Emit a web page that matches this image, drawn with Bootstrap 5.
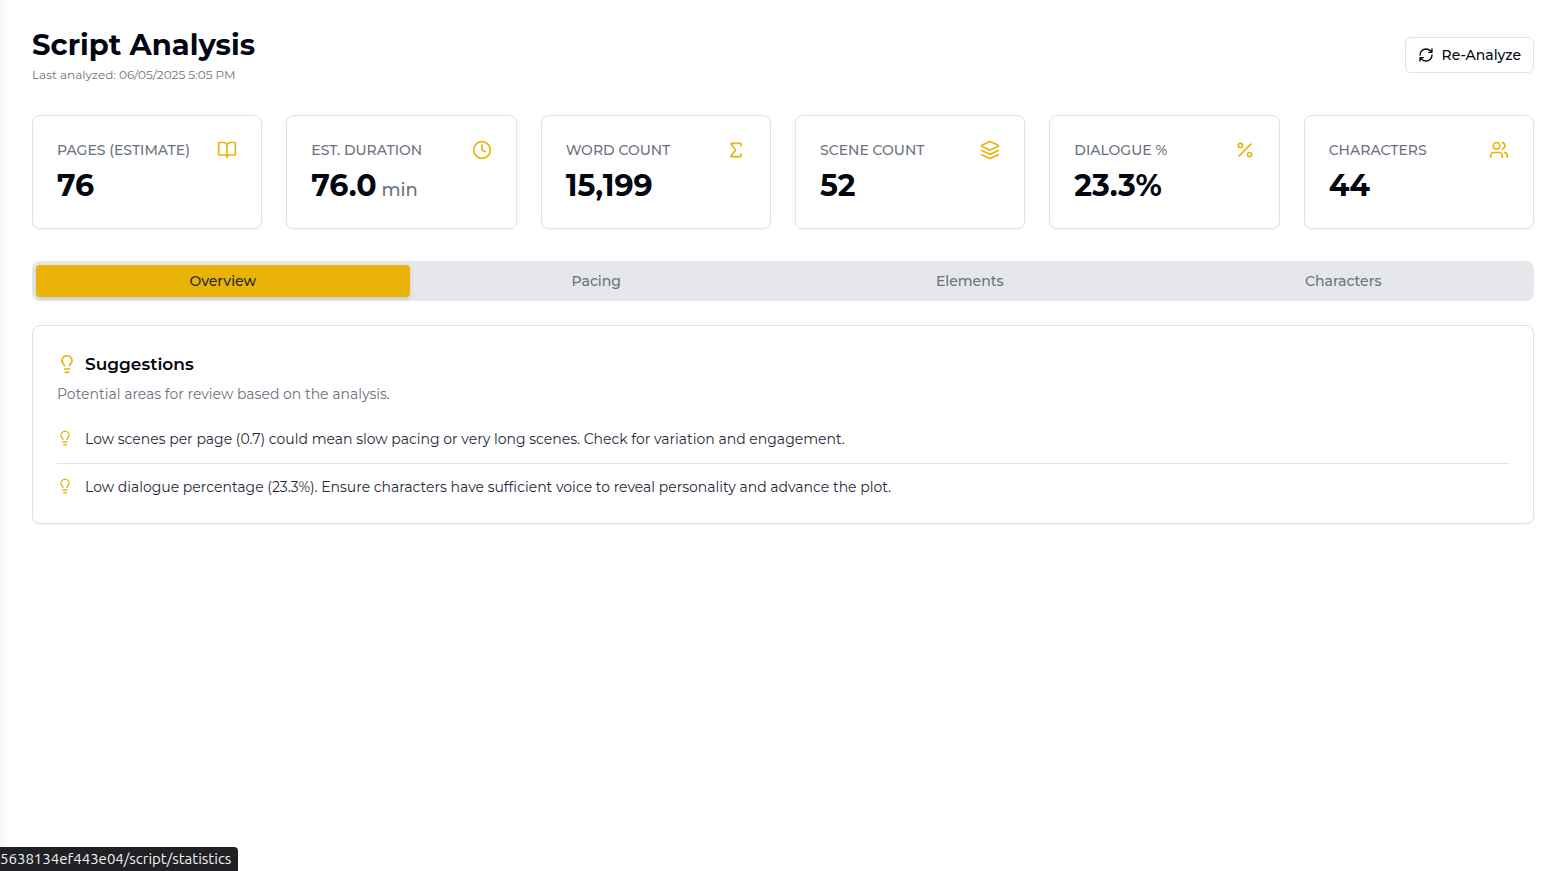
<!DOCTYPE html>
<html lang="en">
<head>
<meta charset="utf-8">
<meta name="viewport" content="width=device-width, initial-scale=1">
<title>Script Analysis</title>
<link href="https://cdn.jsdelivr.net/npm/bootstrap@5.3.0/dist/css/bootstrap.min.css" rel="stylesheet">
<style>
  :root { --ink: #030712; --muted: #6b7280; --line: #e1e3e8; --gold: #eab308; }
  body { font-family: Montserrat, Inter, "Open Sans", sans-serif; font-size: 14px; line-height: 20px; color: var(--ink); background: #fff; }
  svg { fill: none; stroke: currentColor; stroke-width: 2; stroke-linecap: round; stroke-linejoin: round; flex-shrink: 0; }
  .page { min-height: 100vh; padding: 24px 31px 24px 32px; background: linear-gradient(to right, #f7f7f7, #fff 12px); }
  .page-head { margin-bottom: 29px; }
  .page-title { font-size: 29px; line-height: 42px; font-weight: 700; }
  .stamp { padding-bottom: 2px; font-size: 12px; line-height: 18px; color: var(--muted); }
  .btn-outline { height: 36px; padding: 0 12px; border: 1px solid var(--line); border-radius: 6px; font-size: 14px; line-height: 20px; font-weight: 500; color: var(--ink); background: #fff; }
  .btn-outline:hover { background: #f3f4f6; }
  .panel { border: 1px solid var(--line); border-radius: 8px; box-shadow: 0 1px 2px rgba(0,0,0,.06); background: #fff; padding: 24px; height: 100%; }
  .gold { color: var(--gold); }
  .stat-label { font-size: 14px; line-height: 20px; font-weight: 500; color: var(--muted); white-space: nowrap; }
  .stat-value { font-size: 30px; line-height: 36px; font-weight: 700; }
  .stat-unit { font-size: 18px; line-height: 18px; font-weight: 500; color: var(--muted); }
  .tab-strip { margin: 32px 0 24px; padding: 4px; border-radius: 8px; background: #e5e7eb; }
  .tab-strip .nav-link { padding: 6px 12px; border: 0; border-radius: 4px; font-size: 14px; line-height: 20px; font-weight: 500; color: var(--muted); background: transparent; }
  .tab-strip .nav-link.active { color: #1f2937; background: var(--gold); box-shadow: 0 2px 4px rgba(0,0,0,.12); }
  .panel-title { font-size: 17px; line-height: 28px; font-weight: 600; }
  .panel-note { margin: 6px 0 23px; font-size: 14px; color: var(--muted); }
  .tips li { line-height: 24px; font-size: 14px; color: #1f2937; gap: 12px; }
  .tips li + li { margin-top: 12px; padding-top: 11px; border-top: 1px solid var(--line); }
  .tips svg { margin-top: 3px; }
  .link-status { height: 24px; padding: 0 7px 0 0; font: 15px/24px Ubuntu, "Noto Sans", sans-serif; color: #f1f1f1; background: #202124; border-top-right-radius: 4px; }
</style>
</head>
<body>
<svg class="d-none" aria-hidden="true">
  <symbol id="bulb" viewBox="0 0 24 24"><path d="M15 14c.2-1 .7-1.7 1.5-2.5 1-.9 1.5-2.2 1.5-3.5A6 6 0 0 0 6 8c0 1 .2 2.2 1.5 3.5.7.7 1.3 1.5 1.5 2.5M9 18h6M10 22h4"/></symbol>
</svg>
<main class="page">
  <header class="page-head d-flex justify-content-between align-items-center">
    <div>
      <h1 class="page-title mb-0">Script Analysis</h1>
      <p class="stamp mb-0">Last analyzed: 06/05/2025 5:05 PM</p>
    </div>
    <button type="button" class="btn btn-outline d-flex align-items-center gap-2">
      <svg width="16" height="16" viewBox="0 0 24 24"><path d="M3 12a9 9 0 0 1 9-9 9.750 9.750 0 0 1 6.740 2.740L21 8M21 3v5h-5M21 12a9 9 0 0 1-9 9 9.750 9.750 0 0 1-6.740-2.740L3 16M8 16H3v5"/></svg>
      Re-Analyze
    </button>
  </header>

  <section class="row row-cols-2 row-cols-md-3 row-cols-xl-6 g-4" aria-label="Statistics">
    <div class="col"><div class="panel">
      <div class="d-flex justify-content-between mb-2"><span class="stat-label">PAGES (ESTIMATE)</span>
        <svg class="gold" width="20" height="20" viewBox="0 0 24 24"><path d="M12 7v14M3 18a1 1 0 0 1-1-1V4a1 1 0 0 1 1-1h5a4 4 0 0 1 4 4 4 4 0 0 1 4-4h5a1 1 0 0 1 1 1v13a1 1 0 0 1-1 1h-6a3 3 0 0 0-3 3 3 3 0 0 0-3-3z"/></svg></div>
      <div class="stat-value">76</div>
    </div></div>
    <div class="col"><div class="panel">
      <div class="d-flex justify-content-between mb-2"><span class="stat-label">EST. DURATION</span>
        <svg class="gold" width="20" height="20" viewBox="0 0 24 24"><circle cx="12" cy="12" r="10"/><path d="M12 6v6l4 2"/></svg></div>
      <div class="stat-value">76.0<span class="stat-unit"> min</span></div>
    </div></div>
    <div class="col"><div class="panel">
      <div class="d-flex justify-content-between mb-2"><span class="stat-label">WORD COUNT</span>
        <svg class="gold" width="20" height="20" viewBox="0 0 24 24"><path d="M18 7V5a1 1 0 0 0-1-1H6.500a.5.5 0 0 0-.4.800l4.500 6a2 2 0 0 1 0 2.400l-4.500 6a.5.5 0 0 0 .4.800H17a1 1 0 0 0 1-1v-2"/></svg></div>
      <div class="stat-value">15,199</div>
    </div></div>
    <div class="col"><div class="panel">
      <div class="d-flex justify-content-between mb-2"><span class="stat-label">SCENE COUNT</span>
        <svg class="gold" width="20" height="20" viewBox="0 0 24 24"><path d="m12.830 2.180a2 2 0 0 0-1.660 0L2.600 6.080a1 1 0 0 0 0 1.830l8.580 3.910a2 2 0 0 0 1.660 0l8.580-3.900a1 1 0 0 0 0-1.830zM22 17.650l-9.170 4.160a2 2 0 0 1-1.660 0L2 17.650M22 12.650l-9.170 4.160a2 2 0 0 1-1.660 0L2 12.650"/></svg></div>
      <div class="stat-value">52</div>
    </div></div>
    <div class="col"><div class="panel">
      <div class="d-flex justify-content-between mb-2"><span class="stat-label">DIALOGUE %</span>
        <svg class="gold" width="20" height="20" viewBox="0 0 24 24"><path d="M19 5 5 19"/><circle cx="6.500" cy="6.500" r="2.500"/><circle cx="17.500" cy="17.500" r="2.500"/></svg></div>
      <div class="stat-value">23.3%</div>
    </div></div>
    <div class="col"><div class="panel">
      <div class="d-flex justify-content-between mb-2"><span class="stat-label">CHARACTERS</span>
        <svg class="gold" width="20" height="20" viewBox="0 0 24 24"><path d="M16 21v-2a4 4 0 0 0-4-4H6a4 4 0 0 0-4 4v2M22 21v-2a4 4 0 0 0-3-3.870M16 3.130a4 4 0 0 1 0 7.750"/><circle cx="9" cy="7" r="4"/></svg></div>
      <div class="stat-value">44</div>
    </div></div>
  </section>

  <div class="tab-strip nav nav-justified" role="tablist">
    <button type="button" class="nav-item nav-link active" role="tab" aria-selected="true">Overview</button>
    <button type="button" class="nav-item nav-link" role="tab" aria-selected="false">Pacing</button>
    <button type="button" class="nav-item nav-link" role="tab" aria-selected="false">Elements</button>
    <button type="button" class="nav-item nav-link" role="tab" aria-selected="false">Characters</button>
  </div>

  <section class="panel h-auto">
    <h2 class="panel-title d-flex align-items-center gap-2 mb-0"><svg class="gold" width="20" height="20"><use href="#bulb"/></svg>Suggestions</h2>
    <p class="panel-note">Potential areas for review based on the analysis.</p>
    <ul class="tips list-unstyled mb-0">
      <li class="d-flex"><svg class="gold" width="16" height="16"><use href="#bulb"/></svg><span>Low scenes per page (0.7) could mean slow pacing or very long scenes. Check for variation and engagement.</span></li>
      <li class="d-flex"><svg class="gold" width="16" height="16"><use href="#bulb"/></svg><span>Low dialogue percentage (23.3%). Ensure characters have sufficient voice to reveal personality and advance the plot.</span></li>
    </ul>
  </section>
</main>
<div class="link-status position-fixed bottom-0 start-0">5638134ef443e04/script/statistics</div>
<script src="https://cdn.jsdelivr.net/npm/bootstrap@5.3.0/dist/js/bootstrap.bundle.min.js"></script>
</body>
</html>
